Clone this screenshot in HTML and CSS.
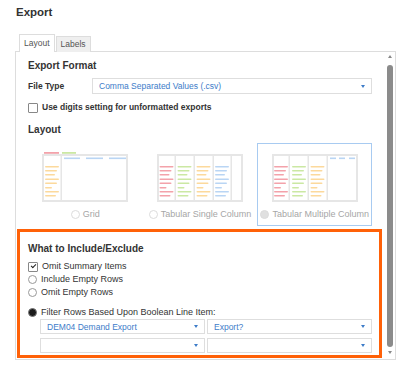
FILE: index.html
```html
<!DOCTYPE html>
<html lang="en">
<head>
  <meta charset="UTF-8" />
  <meta name="viewport" content="width=device-width, initial-scale=1.0"/>
  <title>Export</title>
  <link rel="stylesheet" href="styles.css">
</head>
<body>
  <h1 class="title">Export</h1>

  <div class="tabs">
    <div class="tab active">Layout</div>
    <div class="tab">Labels</div>
  </div>

  <div class="panel">
    <div class="panel-body">
      <h2>Export Format</h2>
      <div class="field">
        <span class="field-label">File Type</span>
        <div class="select">Comma Separated Values (.csv)</div>
      </div>
      <div class="check-row strong"><span class="checkbox"></span>Use digits setting for unformatted exports</div>

      <h2 class="layout-title">Layout</h2>
      <div class="layouts">
        <div class="layout-option">
          <svg class="thumb" width="86" height="50" viewBox="0 0 86 50">
            <defs>
              <g id="bars">
                <rect x="0" y="14" width="14" height="1.6" rx="0.8"/>
                <rect x="0" y="18" width="12" height="1.6" rx="0.8"/>
                <rect x="0" y="22" width="10" height="1.6" rx="0.8"/>
                <rect x="0" y="26.5" width="14" height="1.6" rx="0.8"/>
                <rect x="0" y="30.5" width="12" height="1.6" rx="0.8"/>
                <rect x="0" y="35" width="7" height="1.6" rx="0.8"/>
                <rect x="0" y="39" width="14" height="1.6" rx="0.8"/>
                <rect x="0" y="43" width="11" height="1.6" rx="0.8"/>
              </g>
            </defs>
            <rect x="1" y="3" width="84" height="46" fill="#fff" stroke="#e6e6e6" stroke-width="2"/>
            <rect x="18.5" y="3" width="1.5" height="46" fill="#e6e6e6"/>
            <rect x="2" y="0" width="15" height="1.8" fill="#f3a2aa"/>
            <rect x="20" y="0" width="14" height="1.8" fill="#cbe8a3"/>
            <rect x="22" y="5.5" width="16" height="1.6" fill="#b9d5f4"/>
            <rect x="44" y="5.5" width="17" height="1.6" fill="#b9d5f4"/>
            <rect x="67" y="5.5" width="17" height="1.6" fill="#b9d5f4"/>
            <use href="#bars" x="3" fill="#fcd99c"/>
          </svg>
          <div class="option-label"><span class="radio"></span>Grid</div>
        </div>

        <div class="layout-option">
          <svg class="thumb" width="86" height="50" viewBox="0 0 86 50">
            <rect x="1" y="3" width="84" height="46" fill="#fff" stroke="#e6e6e6" stroke-width="2"/>
            <rect x="17.5" y="3" width="1.5" height="46" fill="#e6e6e6"/>
            <rect x="36.5" y="3" width="1.5" height="46" fill="#e6e6e6"/>
            <rect x="55.5" y="3" width="1.5" height="46" fill="#e6e6e6"/>
            <rect x="73.5" y="3" width="1.5" height="46" fill="#e6e6e6"/>
            <use href="#bars" x="2.5" fill="#f3a2aa"/>
            <use href="#bars" x="20.5" fill="#cbe8a3"/>
            <use href="#bars" x="39.5" fill="#fcd99c"/>
            <use href="#bars" x="58" fill="#b9d5f4"/>
          </svg>
          <div class="option-label"><span class="radio"></span>Tabular Single Column</div>
        </div>

        <div class="layout-option selected">
          <svg class="thumb" width="86" height="50" viewBox="0 0 86 50">
            <rect x="1" y="3" width="84" height="46" fill="#fff" stroke="#e6e6e6" stroke-width="2"/>
            <rect x="16.5" y="3" width="1.5" height="46" fill="#e6e6e6"/>
            <rect x="35.5" y="3" width="1.5" height="46" fill="#e6e6e6"/>
            <rect x="54.5" y="3" width="1.5" height="46" fill="#e6e6e6"/>
            <use href="#bars" x="2" fill="#f3a2aa"/>
            <use href="#bars" x="20" fill="#cbe8a3"/>
            <use href="#bars" x="38.5" fill="#fcd99c"/>
            <rect x="58" y="5.5" width="6" height="1.6" fill="#b9d5f4"/>
            <rect x="67" y="5.5" width="6" height="1.6" fill="#b9d5f4"/>
            <rect x="77" y="5.5" width="6" height="1.6" fill="#b9d5f4"/>
          </svg>
          <div class="option-label"><span class="radio on"></span>Tabular Multiple Column</div>
        </div>
      </div>

      <div class="include">
        <h3>What to Include/Exclude</h3>
        <div class="options">
          <div class="check-row"><span class="checkbox checked"></span>Omit Summary Items</div>
          <div class="check-row"><span class="radio"></span>Include Empty Rows</div>
          <div class="check-row"><span class="radio"></span>Omit Empty Rows</div>
        </div>
        <div class="check-row filter"><span class="radio on"></span>Filter Rows Based Upon Boolean Line Item:</div>
        <div class="select-grid">
          <div class="select">DEM04 Demand Export</div>
          <div class="select">Export?</div>
          <div class="select"></div>
          <div class="select"></div>
        </div>
      </div>
    </div>

    <div class="scrollbar">
      <span class="arrow up"></span>
      <span class="bar"></span>
      <span class="arrow down"></span>
    </div>
  </div>
</body>
</html>
```

FILE: styles.css
```css
body {
  margin: 0;
  padding: 0 15px;
  font-family: "Liberation Sans", Arial, sans-serif;
  color: #333;
  background: #fff;
}

.title {
  margin: 0;
  padding: 5px 0 0 1px;
  font-size: 11.5px;
  line-height: 14px;
  font-weight: bold;
}

.tabs {
  display: flex;
  align-items: flex-end;
  margin: 15px 0 -1px 4px;
}

.tab {
  font-size: 8.5px;
  line-height: 15px;
  padding: 0 4px;
  margin-right: 1px;
  border: 1px solid #ddd;
  border-bottom: none;
  background: #efefef;
  color: #555;
}

.tab.active {
  line-height: 17px;
  background: #fff;
  position: relative;
  z-index: 1;
}

.panel {
  display: flex;
  height: 309px;
  box-sizing: border-box;
  border: 1px solid #ddd;
}

.panel-body {
  flex: 1;
  padding: 7px 13px 0 12px;
  overflow: hidden;
}

h2, h3 {
  margin: 0;
  font-size: 10px;
  line-height: 13px;
  font-weight: bold;
}

.field {
  display: flex;
  align-items: center;
  margin-top: 6px;
}

.field-label {
  width: 64px;
  font-size: 8.5px;
  font-weight: bold;
}

.select {
  flex: 1;
  height: 16px;
  box-sizing: border-box;
  border: 1px solid #dedede;
  background: #fff;
  display: flex;
  align-items: center;
  padding: 0 6px;
  font-size: 8.5px;
  color: #3d7cc9;
}

.select::after {
  content: "";
  margin-left: auto;
  border-style: solid;
  border-width: 3px 2.5px 0;
  border-color: #3d7cc9 transparent transparent;
}

.check-row {
  display: flex;
  align-items: center;
  font-size: 9px;
  line-height: 13px;
}

.check-row.strong {
  margin-top: 7px;
  font-size: 8.5px;
  font-weight: bold;
}

.checkbox {
  width: 10px;
  height: 10px;
  box-sizing: border-box;
  border: 1px solid #888;
  border-radius: 1px;
  margin-right: 4px;
  display: flex;
  align-items: center;
  justify-content: center;
}

.checkbox.checked::after {
  content: "";
  width: 2px;
  height: 4px;
  margin-top: -2px;
  border: solid #222;
  border-width: 0 1.5px 1.5px 0;
  transform: rotate(45deg);
}

.radio {
  width: 9px;
  height: 9px;
  box-sizing: border-box;
  border: 1px solid #999;
  border-radius: 50%;
  margin-right: 4px;
  background: #fff;
}

.radio.on {
  background: #1b1b1b;
  border-color: #777;
}

.layout-title {
  margin-top: 9px;
}

.layouts {
  display: grid;
  grid-template-columns: repeat(3, 1fr);
  margin-top: 7px;
}

.layout-option {
  display: flex;
  flex-direction: column;
  align-items: center;
  padding: 8px 0 5px;
  border: 1px solid transparent;
}

.layout-option.selected {
  border-color: #a8cbf1;
}

.thumb {
  display: block;
}

.option-label {
  display: flex;
  align-items: center;
  margin-top: 6px;
  font-size: 9px;
  line-height: 12px;
  color: #a6a6a6;
}

.option-label .radio {
  border-color: #dcdcdc;
  margin-right: 3px;
}

.option-label .radio.on {
  background: #e0e0e0;
}

.include {
  margin: 3px -10px 0 -11px;
  padding: 10px 7px 2px 8px;
  border: 3px solid #ff6108;
}

.options {
  margin-top: 5px;
}

.filter {
  margin-top: 7px;
}

.select-grid {
  display: grid;
  grid-template-columns: 1fr 1fr;
  gap: 4px 2px;
  margin-left: 12px;
}

.select-grid .select {
  height: 15px;
}

.scrollbar {
  width: 10px;
  display: flex;
  flex-direction: column;
  align-items: center;
}

.arrow {
  width: 0;
  height: 0;
  border-style: solid;
}

.arrow.up {
  margin-top: 3px;
  border-width: 0 2.5px 3px;
  border-color: transparent transparent #888;
}

.arrow.down {
  margin-bottom: 5px;
  border-width: 3px 2.5px 0;
  border-color: #888 transparent transparent;
}

.bar {
  flex: 1;
  width: 6px;
  margin: 7px 0 4px;
  border-radius: 3px;
  background: #8b8b8b;
}
```
